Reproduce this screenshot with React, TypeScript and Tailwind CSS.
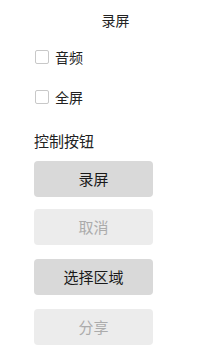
export default function App() {
  const buttons = [
    { label: "录屏", disabled: false, mt: "mt-0" },
    { label: "取消", disabled: true, mt: "mt-[12px]" },
    { label: "选择区域", disabled: false, mt: "mt-[14px]" },
    { label: "分享", disabled: true, mt: "mt-[14px]" },
  ]

  return (
    <div
      className="w-[215px] h-[359px] bg-white text-[#222] overflow-hidden"
      style={{ fontFamily: '"Noto Sans CJK SC", "Noto Sans", sans-serif' }}
    >
      {/* 标题 */}
      <div className="pl-4 pt-[10px] text-center text-[14px] leading-[20px]">录屏</div>

      {/* 选项 */}
      <div className="pl-[35px] mt-[20px] flex flex-col gap-[26px]">
        {["音频", "全屏"].map((t) => (
          <label key={t} className="flex items-center gap-[6px] text-[14px] leading-[14px]">
            <span className="w-[14px] h-[14px] rounded-[2px] border border-[#c8c8c8] bg-white" />
            <span>{t}</span>
          </label>
        ))}
      </div>

      {/* 控制按钮 */}
      <div className="pl-[34px] mt-[27px] text-[15px] leading-[20px]">控制按钮</div>

      <div className="pl-[34px] mt-[10px] flex flex-col">
        {buttons.map((b) => (
          <button
            key={b.label}
            disabled={b.disabled}
            className={
              b.mt +
              " w-[119px] h-[36px] rounded-[4px] text-[15px] " +
              (b.disabled ? "bg-[#ececec] text-[#ababab]" : "bg-[#d9d9d9] text-[#1a1a1a]")
            }
          >
            {b.label}
          </button>
        ))}
      </div>
    </div>
  )
}
